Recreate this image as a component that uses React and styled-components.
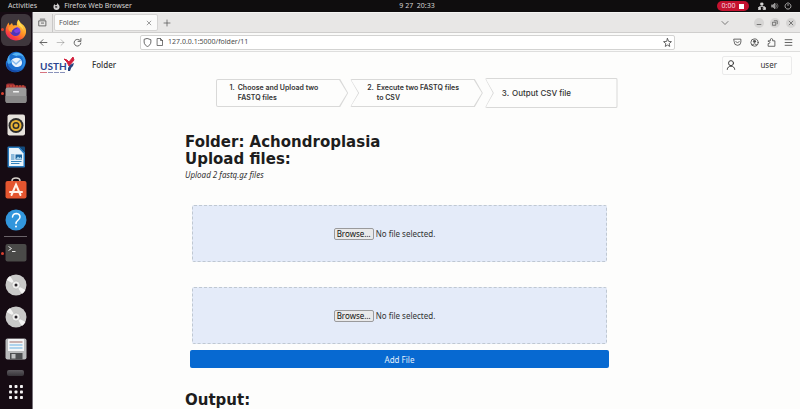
import React from "react";
import styled, { createGlobalStyle, css } from "styled-components";

const GlobalStyle = createGlobalStyle`
  *, *::before, *::after { box-sizing: border-box; }
  body { margin: 0; background: #fdfdfc; }
  button, input { font: inherit; color: inherit; }
  button { padding: 0; border: 0; background: none; cursor: pointer; }
  svg { display: block; flex: none; }
`;

const ubuntu = `"Noto Sans", "Open Sans", sans-serif`;
const dejavu = `"DejaVu Sans", sans-serif`;

/* ---------- desktop ---------- */

const Desktop = styled.div`
  display: flex;
  flex-direction: column;
  height: 100vh;
  overflow: hidden;
  font-family: ${ubuntu};
  color: #333;
`;

const TopBar = styled.header`
  display: grid;
  grid-template-columns: 1fr auto 1fr;
  align-items: center;
  height: 12px;
  flex: none;
  background: #0f0d0e;
  color: #d6d4d4;
  font-size: 7px;
  line-height: 12px;
`;

const TopLeft = styled.div`
  display: flex;
  align-items: center;
  gap: 16px;
  padding-left: 8px;
`;

const AppMenu = styled.button`
  display: flex;
  align-items: center;
  gap: 4px;
`;

const Clock = styled.time`
  white-space: pre;
  padding-left: 34px;
`;

const TopRight = styled.div`
  display: flex;
  align-items: center;
  justify-content: flex-end;
  gap: 5px;
  padding-right: 8px;
`;

const Recorder = styled.button`
  display: flex;
  align-items: center;
  justify-content: center;
  gap: 4px;
  width: 32px;
  height: 10px;
  margin-right: 4px;
  border-radius: 5px;
  background: #c4122f;
  color: #f6dbe0;
  line-height: 10px;

  &::after {
    content: "";
    width: 5px;
    height: 5px;
    background: #fff;
  }
`;

const Workspace = styled.div`
  display: flex;
  flex: 1;
  min-height: 0;
`;

const Dock = styled.nav`
  display: flex;
  flex-direction: column;
  flex: none;
  width: 33px;
  padding: 2px 1px 0 0;
  background: #160b13;
  border-right: 1px solid #77727a;
`;

const DockGroup = styled.div`
  display: grid;
  grid-auto-rows: 1fr;
  flex: none;
  height: ${(p) => (p.$short ? 128 : 222)}px;
`;

const DockItem = styled.button`
  display: flex;
  align-items: center;
  justify-content: center;
  position: relative;
  margin-left: 1px;
  border-radius: 6px;
  ${(p) => p.$active && css`background: #3e363c;`}

  &::before {
    content: "";
    position: absolute;
    left: 0;
    width: 3px;
    height: 3px;
    border-radius: 50%;
    background: ${(p) => (p.$running ? "#d8402f" : "transparent")};
  }
`;

const DockRule = styled.hr`
  width: 23px;
  height: 1px;
  margin: 0 auto;
  border: 0;
  flex: none;
  background: #6b6469;
`;

const DockEnd = styled.div`
  display: flex;
  flex-direction: column;
  align-items: center;
  gap: 8px;
  padding-top: 5px;
`;

const Drive = styled.div`
  width: 17px;
  height: 6px;
  border-radius: 2px;
  background: linear-gradient(#5e5b60, #373439);
`;

/* ---------- browser ---------- */

const Browser = styled.section`
  display: flex;
  flex-direction: column;
  flex: 1;
  min-width: 0;
  background: #fdfdfc;
`;

const TabStrip = styled.div`
  display: flex;
  align-items: center;
  flex: none;
  height: 21px;
  padding: 0 4px 0 1px;
  background: #e8e7e6;
  border-top: 1px solid #f4f4f3;
  border-bottom: 1px solid #cfcecd;
  color: #555;
`;

const IconButton = styled.button`
  display: flex;
  align-items: center;
  justify-content: center;
  flex: none;
  width: 17px;
  height: 16px;
`;

const TabRule = styled.span`
  width: 1px;
  height: 18px;
  margin: 0 1px;
  flex: none;
  background: #c9c8c7;
`;

const Tab = styled.div`
  display: flex;
  align-items: center;
  justify-content: space-between;
  width: 104px;
  height: 17px;
  padding-left: 4px;
  border: 1px solid #d5d4d3;
  border-radius: 2px;
  background: #fbfbfa;
  font-size: 7px;
  line-height: 10px;
`;

const WindowControls = styled.div`
  display: flex;
  gap: 6px;
  margin-left: 21px;
`;

const RoundButton = styled.button`
  display: flex;
  align-items: center;
  justify-content: center;
  width: 10px;
  height: 10px;
  border-radius: 50%;
  background: #d6d5d4;
`;

const Spacer = styled.div`
  flex: 1;
`;

const Toolbar = styled.div`
  display: flex;
  align-items: center;
  flex: none;
  height: 19px;
  padding: 0 3px 0 2px;
  border-bottom: 1px solid #dededd;
  background: #fafaf9;
  color: #4c4c4c;
`;

const AddressBar = styled.div`
  display: flex;
  align-items: center;
  gap: 4px;
  flex: 1;
  height: 15px;
  margin: 0 54px;
  padding: 0 2px;
  border: 1px solid #d3d3d2;
  border-radius: 2px;
  background: #fff;
`;

const AddressInput = styled.input`
  flex: 1;
  min-width: 0;
  padding: 0;
  border: 0;
  outline: 0;
  background: none;
  font-size: 7px;
  line-height: 12px;
`;

/* ---------- page ---------- */

const Page = styled.div`
  flex: 1;
  min-height: 0;
  overflow: auto;
  scrollbar-width: none;
`;

const SiteHeader = styled.header`
  display: flex;
  align-items: center;
  gap: 16px;
  height: 26px;
  padding: 0 8px 0 7px;
`;

const NavLink = styled.a`
  font-size: 8px;
  font-weight: 500;
  line-height: 12px;
  color: #333;
  text-decoration: none;
`;

const UserButton = styled.button`
  display: flex;
  align-items: center;
  justify-content: space-between;
  width: 70px;
  height: 19px;
  padding: 0 14px 0 3px;
  border: 1px solid #ebebeb;
  border-radius: 2px;
  font-size: 8px;
  line-height: 12px;
`;

const Steps = styled.ol`
  display: grid;
  grid-template-columns: repeat(3, 1fr);
  align-items: center;
  gap: 2px;
  width: 402px;
  max-width: 100%;
  margin: 0 auto;
  padding: 0;
  list-style: none;
  font-family: Inter, sans-serif;
  font-size: 7px;
  font-weight: 600;
  line-height: 10px;
`;

const shapes = {
  first: "polygon(0 0, calc(100% - 8px) 0, 100% 50%, calc(100% - 8px) 100%, 0 100%)",
  middle: "polygon(0 0, calc(100% - 8px) 0, 100% 50%, calc(100% - 8px) 100%, 0 100%, 8px 50%)",
  last: "polygon(0 0, 100% 0, 100% 100%, 0 100%, 8px 50%)",
};

const Step = styled.li`
  display: flex;
  align-items: center;
  gap: 3px;
  position: relative;
  height: 28px;
  padding-left: ${(p) => (p.$shape === "first" ? 14 : 17)}px;
  border-radius: 2px;
  background: #d9d9d8;
  clip-path: ${(p) => shapes[p.$shape]};

  ${(p) => p.$shape === "last" && css`
    height: 30px;
    font-size: 8px;
    font-weight: 500;
  `}

  &::before {
    content: "";
    position: absolute;
    inset: 1px;
    border-radius: 1px;
    background: #fdfdfc;
    clip-path: ${(p) => shapes[p.$shape]};
  }

  & > span {
    position: relative;
  }
`;

const StepNumber = styled.span`
  align-self: ${(p) => (p.$single ? "center" : "flex-start")};
  margin-top: ${(p) => (p.$single ? 0 : 4)}px;
`;

const Main = styled.main`
  padding: 26px 152px 0;
`;

const Heading = styled.h1`
  margin: 0;
  font-family: ${dejavu};
  font-size: 15px;
  font-weight: 700;
  line-height: 17px;
  color: #1d1d1d;
`;

const Hint = styled.p`
  margin: 0;
  font-size: 8px;
  font-style: italic;
  line-height: 14px;
`;

const UploadForm = styled.form`
  display: flex;
  flex-direction: column;
  margin: 23px 39px 24px 5px;
`;

const DropZone = styled.label`
  display: flex;
  align-items: center;
  justify-content: center;
  gap: 2px;
  height: 57px;
  margin: 0 2px 25px;
  padding-right: 30px;
  border: 1px dashed #bfc8d2;
  border-radius: 2px;
  background: #e4ebf9;
  font-size: 8px;
  line-height: 10px;
  cursor: pointer;

  &:last-of-type {
    margin-bottom: 6px;
  }
`;

const FileInput = styled.input`
  position: absolute;
  width: 1px;
  height: 1px;
  opacity: 0;
`;

const Browse = styled.span`
  padding: 0 2px;
  border: 1px solid #9a9a9c;
  border-radius: 2px;
  background: #e9e9ea;
  color: #111;
`;

const AddButton = styled.button`
  height: 18px;
  border-radius: 2px;
  background: #0769d1;
  color: #e3effb;
  font-size: 8px;
`;

/* ---------- drawings ---------- */

const Line = ({ size = 9, children, sw = 1.5 }) => (
  <svg width={size} height={size} viewBox="0 0 16 16" fill="none" stroke="currentColor" strokeWidth={sw} strokeLinecap="round" strokeLinejoin="round" aria-hidden="true">
    {children}
  </svg>
);

const Art = ({ children, size = 22 }) => (
  <svg width={size} height={size} viewBox="0 0 44 44" aria-hidden="true">
    {children}
  </svg>
);

const FirefoxArt = () => (
  <Art>
    <defs>
      <linearGradient id="fox" x1="0.85" y1="0.1" x2="0.25" y2="1">
        <stop offset="0" stopColor="#ffe14d" />
        <stop offset="0.45" stopColor="#ff9524" />
        <stop offset="0.8" stopColor="#f9403f" />
        <stop offset="1" stopColor="#e0206e" />
      </linearGradient>
    </defs>
    <path d="M27 1c2 3 3 6 7 9 5 4 9 9 8 17-1 10-10 16-20 16S1 35 1 24c0-7 3-12 6-17l2 6 5-5 2 5c3-1 6-1 8 0-1-5 0-9 3-12z" fill="url(#fox)" />
    <circle cx="22" cy="25" r="9" fill="#7a3fe0" />
    <path d="M13 19c4-3 10-3 12 1-4 0-6 1-7 4 2 5 7 5 12 1-1 8-9 11-15 7-5-3-6-9-2-13z" fill="#4c37b5" />
    <path d="M7 17c5-4 11-3 17 1-5 0-7 1-8 4-2 0-3 2-2 5-5-2-8-5-7-10z" fill="#ff9a2b" />
    <path d="M28 3c0 7 9 10 9 21-1-5-5-9-9-11-2-3-2-7 0-10z" fill="#ffdf57" />
  </Art>
);

const ThunderbirdArt = () => (
  <Art>
    <path d="M9 8C16-1 30 0 37 9c6 7 6 18 0 26-7 9-20 10-29 3C2 33 0 26 3 19l2 2c0-6 1-10 4-13z" fill="#1b6fd0" />
    <path d="M14 7c9-7 20-3 25 6-6-4-11-5-16-3z" fill="#58b4f4" />
    <path d="M5 23c1 12 14 20 27 14-9 8-22 6-27-2-2-4-2-8 0-12z" fill="#1649a5" />
    <path d="M13 19c3-6 16-8 20 0 3 7-1 12-8 13-7 1-13-6-12-13z" fill="#e9f3fd" />
    <path d="M14 19l8 7 9-8" fill="none" stroke="#84b9ed" strokeWidth="3" />
    <path d="M10 7c-3 8 0 13 5 16l-8 3c-5-6-2-14 3-19z" fill="#4aa8ef" />
    <path d="M30 8c9 8 9 20 1 28 10-4 13-17 6-25z" fill="#2f8fe4" />
  </Art>
);

const FilesArt = () => (
  <Art>
    <path d="M2 7q0-4 4-4h11l4 4h17q4 0 4 4v9H2z" fill="#a02f34" />
    <path d="M4 8h34" stroke="#dd5b37" strokeWidth="2" strokeDasharray="4 2" />
    <rect x="1" y="11" width="42" height="31" rx="4" fill="#9c9b9b" />
    <path d="M1 28h42v10q0 4-4 4H5q-4 0-4-4z" fill="#898888" />
    <rect x="16" y="18" width="12" height="3" rx="1" fill="#f1f1f1" />
  </Art>
);

const MusicArt = () => (
  <Art>
    <rect x="5" y="1" width="35" height="42" rx="4" fill="#e6e2dc" />
    <circle cx="22" cy="23" r="15" fill="#2e2d2d" />
    <circle cx="22" cy="23" r="9" fill="none" stroke="#e9b436" strokeWidth="4" />
    <circle cx="22" cy="23" r="4" fill="#e9b436" />
  </Art>
);

const WriterArt = () => (
  <Art>
    <path d="M5 3q0-2 2-2h22l11 11v29q0 2-2 2H7q-2 0-2-2z" fill="#2679bd" />
    <path d="M29 1h9q2 0 2 2v9z" fill="#124a7d" />
    <path d="M8 4h19l10 11v25H8z" fill="#eaf4fb" />
    <path d="M12 18h7M12 22h7M12 26h7M12 31h21M12 35h17" stroke="#3182bd" strokeWidth="2" />
    <rect x="21" y="17" width="13" height="10" fill="#1c659f" />
    <path d="M22 26l4-5 3 3 2-2 3 4z" fill="#a4d2ee" />
  </Art>
);

const SoftwareArt = () => (
  <Art>
    <path d="M14 11V8q0-6 8-6t8 6v3" fill="none" stroke="#d8d2cb" strokeWidth="3" />
    <rect x="1" y="8" width="42" height="35" rx="4" fill="#e4552f" />
    <path d="M13 36l9-21 9 21M10 30h24" fill="none" stroke="#fff1e8" strokeWidth="4" strokeLinecap="round" />
  </Art>
);

const HelpArt = () => (
  <Art>
    <circle cx="22" cy="22" r="21" fill="#3296dc" />
    <path d="M15 16q1-7 8-7 7 1 7 7c0 6-8 6-8 13" fill="none" stroke="#fff" strokeWidth="3" strokeLinecap="round" />
    <circle cx="22" cy="35" r="2" fill="#fff" />
  </Art>
);

const TerminalArt = () => (
  <Art>
    <rect x="1" y="4" width="42" height="35" rx="4" fill="#4a4a48" />
    <path d="M7 9l6 4-6 4M14 19h7" fill="none" stroke="#e6e6e6" strokeWidth="2" />
  </Art>
);

const DiscArt = () => (
  <Art>
    <circle cx="22" cy="22" r="21" fill="#c9c9c8" />
    <path d="M22 22L3 12a21 21 0 0 1 7-8zM22 22l19 10a21 21 0 0 1-7 8z" fill="#f3f3f2" />
    <circle cx="22" cy="22" r="8" fill="#efefee" stroke="#aaa" />
    <circle cx="22" cy="22" r="3" fill="#29252a" />
  </Art>
);

const FloppyArt = () => (
  <Art>
    <rect x="1" y="1" width="42" height="42" rx="4" fill="#b9bbbc" />
    <rect x="6" y="2" width="32" height="24" rx="1" fill="#f4f6f7" />
    <path d="M9 8h26" stroke="#a06f69" strokeWidth="2" />
    <path d="M9 14h26M9 20h26" stroke="#69b1e2" strokeWidth="2" />
    <rect x="10" y="30" width="25" height="13" fill="#4e5052" />
    <rect x="13" y="32" width="8" height="9" fill="#bfc1c2" />
  </Art>
);

const GridArt = () => (
  <Art size={16}>
    {[7, 22, 37].map((y) =>
      [7, 22, 37].map((x) => <rect key={`${x}-${y}`} x={x - 4} y={y - 4} width="8" height="8" rx="2" fill="#f5f3f4" />)
    )}
  </Art>
);

const Logo = () => (
  <svg width="36" height="18" viewBox="0 0 36 18" role="img" aria-label="USTH">
    <text x="0" y="14" fontFamily="Lato, sans-serif" fontWeight="700" fontSize="10" fill="#2a4590">USTH</text>
    <path d="M24 3l3 1 2 2 4-5 1 3-5 6-2-4z" fill="#d3203c" stroke="#d3203c" />
    <path d="M28 15v-3q2-4 6-5l-1 3q-2 1-3 5z" fill="#28427f" />
    <path d="M0 16.500h7" stroke="#d77480" />
    <path d="M8 16.500h18" stroke="#8992ba" strokeDasharray="5 1" />
  </svg>
);

const apps = [
  ["Firefox", FirefoxArt, true, true],
  ["Thunderbird", ThunderbirdArt],
  ["Files", FilesArt, true],
  ["Rhythmbox", MusicArt],
  ["Writer", WriterArt],
  ["Software", SoftwareArt],
  ["Help", HelpArt],
];

const devices = [
  ["Terminal", TerminalArt, true],
  ["Disc 1", DiscArt],
  ["Disc 2", DiscArt],
  ["Floppy", FloppyArt],
];

const DockIcons = ({ items, short }) => (
  <DockGroup $short={short}>
    {items.map(([name, Icon, running, active]) => (
      <DockItem key={name} aria-label={name} $running={running} $active={active}>
        <Icon />
      </DockItem>
    ))}
  </DockGroup>
);

const FileField = ({ id }) => (
  <DropZone htmlFor={id}>
    <FileInput id={id} type="file" />
    <Browse>Browse…</Browse>
    <span>No file selected.</span>
  </DropZone>
);

export default function App() {
  return (
    <Desktop>
      <GlobalStyle />
      <TopBar>
        <TopLeft>
          <button>Activities</button>
          <AppMenu>
            <svg width="7" height="7" viewBox="0 0 16 16" aria-hidden="true">
              <path d="M10 0c1 3 5 4 5 9 0 4-3 7-7 7s-7-3-7-7c0-3 1-5 2-7l2 3 4-1z" fill="#d0cecf" />
              <path d="M5 7c2-1 5 0 5 2s-3 3-5 1z" fill="#403d3f" />
            </svg>
            Firefox Web Browser
          </AppMenu>
        </TopLeft>
        <Clock>{"9 27  20:33"}</Clock>
        <TopRight>
          <Recorder aria-label="Stop recording">0:00</Recorder>
          <Line size={8}>
            <path d="M6 2h4v4H6zM1 11h4v4H1zM11 11h4v4h-4z" fill="currentColor" />
            <path d="M8 6v3M3 11V9h10v2" />
          </Line>
          <Line size={8}>
            <path d="M1 6h3l4-4v12l-4-4H1z" fill="currentColor" opacity=".7" />
            <path d="M10 5q3 3 0 6M12 3q5 5 0 10" opacity=".6" />
          </Line>
          <Line size={8}>
            <path d="M5 3a6 6 0 1 0 6 0M8 1v6" />
          </Line>
        </TopRight>
      </TopBar>
      <Workspace>
        <Dock aria-label="Dock">
          <DockIcons items={apps} />
          <DockRule />
          <DockIcons items={devices} short />
          <DockEnd>
            <Drive />
            <button aria-label="Show applications"><GridArt /></button>
          </DockEnd>
        </Dock>
        <Browser>
          <TabStrip>
            <IconButton aria-label="Recent browsing">
              <Line><path d="M2 5h12v9H2zM4 2h8M6 9h4" /></Line>
            </IconButton>
            <TabRule />
            <Tab>
              Folder
              <IconButton aria-label="Close tab"><Line size={6}><path d="M3 3l10 10M13 3L3 13" /></Line></IconButton>
            </Tab>
            <IconButton aria-label="New tab"><Line size={8}><path d="M8 2v12M2 8h12" /></Line></IconButton>
            <Spacer />
            <IconButton aria-label="List all tabs"><Line size={8}><path d="M2 5l6 6 6-6" /></Line></IconButton>
            <WindowControls>
              <RoundButton aria-label="Minimize"><Line size={6} sw={2}><path d="M3 12h10" /></Line></RoundButton>
              <RoundButton aria-label="Restore"><Line size={6} sw={2}><path d="M2 6h8v8H2zM6 2h8v8" /></Line></RoundButton>
              <RoundButton aria-label="Close"><Line size={6} sw={2}><path d="M3 3l10 10M13 3L3 13" /></Line></RoundButton>
            </WindowControls>
          </TabStrip>
          <Toolbar>
            <IconButton aria-label="Back"><Line><path d="M14 8H2M7 3L2 8l5 5" /></Line></IconButton>
            <IconButton aria-label="Forward"><Line><path d="M2 8h12M9 3l5 5-5 5" opacity=".4" /></Line></IconButton>
            <IconButton aria-label="Reload"><Line><path d="M13 5a6 6 0 1 0 1 4M14 1v5H9" /></Line></IconButton>
            <AddressBar>
              <Line><path d="M8 1l6 2v4c0 4-3 7-6 8-3-1-6-4-6-8V3z" /></Line>
              <Line size={8}><path d="M3 1h6l4 4v10H3zM9 1v4h4" /></Line>
              <AddressInput aria-label="Address" defaultValue="127.0.0.1:5000/folder/11" />
              <Line><path d="M8 1l2 5 5 .5-4 3.500 1 5-4-2.500L4 15l1-5-4-3.500L6 6z" /></Line>
            </AddressBar>
            <IconButton aria-label="Pocket"><Line><path d="M2 2h12v5a6 6 0 0 1-12 0zM5 6l3 3 3-3" /></Line></IconButton>
            <IconButton aria-label="Account">
              <Line><circle cx="8" cy="8" r="6.500" /><circle cx="8" cy="6" r="2" fill="currentColor" /><path d="M4 12q4-4 8 0" /></Line>
            </IconButton>
            <IconButton aria-label="Extensions"><Line><path d="M2 14V10q3 0 3-2T2 6V5h4q-1-4 2-4t2 4h4v9z" /></Line></IconButton>
            <IconButton aria-label="Menu"><Line><path d="M2 3h12M2 8h12M2 13h12" /></Line></IconButton>
          </Toolbar>
          <Page>
            <SiteHeader>
              <Logo />
              <NavLink href="#folder">Folder</NavLink>
              <Spacer />
              <UserButton>
                <Line size={10}><circle cx="8" cy="5" r="4" /><path d="M2 15c0-7 12-7 12 0" /></Line>
                user
              </UserButton>
            </SiteHeader>
            <Steps>
              <Step $shape="first"><StepNumber>1.</StepNumber><span>Choose and Upload two<br />FASTQ files</span></Step>
              <Step $shape="middle"><StepNumber>2.</StepNumber><span>Execute two FASTQ files<br />to CSV</span></Step>
              <Step $shape="last"><StepNumber $single>3.</StepNumber><span>Output CSV file</span></Step>
            </Steps>
            <Main>
              <Heading>Folder: Achondroplasia</Heading>
              <Heading as="h2">Upload files:</Heading>
              <Hint>Upload 2 fastq.gz files</Hint>
              <UploadForm onSubmit={(e) => e.preventDefault()}>
                <FileField id="fastq-1" />
                <FileField id="fastq-2" />
                <AddButton type="submit">Add File</AddButton>
              </UploadForm>
              <Heading as="h2">Output:</Heading>
            </Main>
          </Page>
        </Browser>
      </Workspace>
    </Desktop>
  );
}
